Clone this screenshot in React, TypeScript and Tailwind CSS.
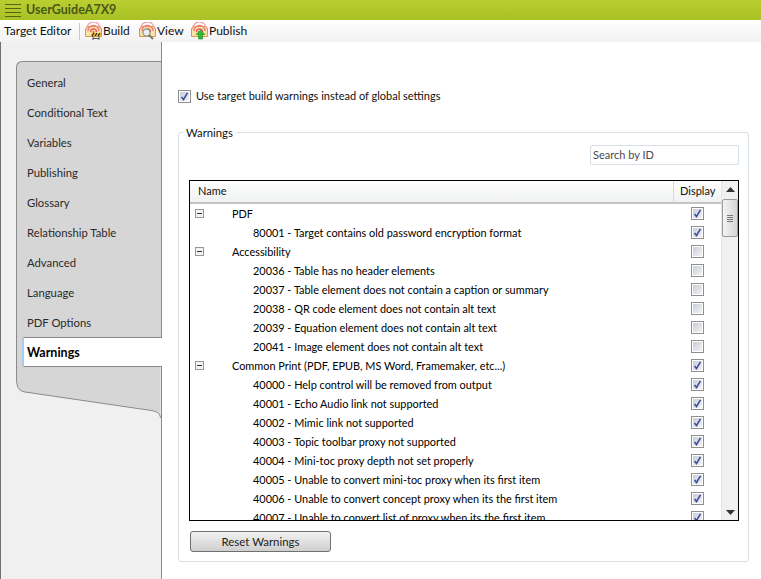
const tabs = ['General', 'Conditional Text', 'Variables', 'Publishing', 'Glossary', 'Relationship Table', 'Advanced', 'Language', 'PDF Options'];

type Row = { label: string; checked: boolean; group?: boolean };

const rows: Row[] = [
  { label: 'PDF', checked: true, group: true },
  { label: '80001 - Target contains old password encryption format', checked: true },
  { label: 'Accessibility', checked: false, group: true },
  { label: '20036 - Table has no header elements', checked: false },
  { label: '20037 - Table element does not contain a caption or summary', checked: false },
  { label: '20038 - QR code element does not contain alt text', checked: false },
  { label: '20039 - Equation element does not contain alt text', checked: false },
  { label: '20041 - Image element does not contain alt text', checked: false },
  { label: 'Common Print (PDF, EPUB, MS Word, Framemaker, etc...)', checked: true, group: true },
  { label: '40000 - Help control will be removed from output', checked: true },
  { label: '40001 - Echo Audio link not supported', checked: true },
  { label: '40002 - Mimic link not supported', checked: true },
  { label: '40003 - Topic toolbar proxy not supported', checked: true },
  { label: '40004 - Mini-toc proxy depth not set properly', checked: true },
  { label: '40005 - Unable to convert mini-toc proxy when its first item', checked: true },
  { label: '40006 - Unable to convert concept proxy when its the first item', checked: true },
  { label: '40007 - Unable to convert list of proxy when its the first item', checked: true },
];

function Check({ checked }: { checked: boolean }) {
  return (
    <div className="w-[13px] h-[13px] border border-[#8e8f8f] bg-white p-px shrink-0">
      <div className="relative w-full h-full bg-gradient-to-br from-[#c9cdd6] to-[#f2f3f6]">
        {checked && (
          <svg viewBox="0 0 9 9" className="absolute inset-0 w-[9px] h-[9px]">
            <path d="M1.5 5 L3.5 7.5 L7.5 0.8" fill="none" stroke="#3f4f9e" strokeWidth="1.6" />
          </svg>
        )}
      </div>
    </div>
  );
}

function ToolIcon({ kind }: { kind: 'build' | 'view' | 'publish' }) {
  return (
    <svg viewBox="0 0 17 18" className="w-[17px] h-[18px] shrink-0">
      <path d="M0.5 6.5 L3 4.5 H14 L16.5 6.5 V14.5 H0.5 Z" fill="#fbe3a8" stroke="#d99a45" />
      <path d="M3 9 A5.5 5.5 0 0 1 14 9" fill="none" stroke="#ef7f7f" strokeWidth="1.4" />
      <path d="M1.5 7 A7 7 0 0 1 15.5 7" fill="none" stroke="#f29a9a" strokeWidth="1.2" />
      <path d="M5.5 10 A3 3 0 0 1 11.5 10" fill="none" stroke="#e85f5f" strokeWidth="1.4" />
      <circle cx="8.5" cy="10" r="1.1" fill="#e04f4f" />
      {kind === 'build' && (
        <>
          <rect x="6" y="11" width="10" height="3" fill="#f2c230" />
          <path d="M7 14 L9 11 M10 14 L12 11 M13 14 L15 11" stroke="#222" strokeWidth="1.2" />
          <path d="M8 14 V18 M14 14 V18 M8 16.5 H14" stroke="#555" strokeWidth="1" />
        </>
      )}
      {kind === 'view' && (
        <>
          <circle cx="7.5" cy="10.5" r="3.5" fill="#e8eef2" stroke="#8a9298" strokeWidth="1.2" />
          <path d="M10 13 L14 17" stroke="#777" strokeWidth="1.8" />
        </>
      )}
      {kind === 'publish' && <path d="M9.5 8 L14 12.5 H11.5 V17 H7.5 V12.5 H5 Z" fill="#35b535" stroke="#1e8a1e" strokeWidth="0.6" />}
    </svg>
  );
}

function ToolButton({ kind, label, className }: { kind: 'build' | 'view' | 'publish'; label: string; className: string }) {
  return (
    <div className={`flex items-center gap-[1px] ${className}`}>
      <ToolIcon kind={kind} />
      <span>{label}</span>
    </div>
  );
}

export default function App() {
  return (
    <div className="w-[761px] h-[579px] overflow-hidden flex flex-col bg-[#f0f0f0] text-[12px] text-[#111] font-['Lato',sans-serif]">
      {/* Title bar */}
      <div className="h-5 shrink-0 flex items-center bg-gradient-to-b from-[#b9cf30] to-[#a9c126]">
        <div className="ml-[5px] w-4 flex flex-col gap-[3px]">
          <div className="h-px bg-[#57631a]" />
          <div className="h-px bg-[#57631a]" />
          <div className="h-px bg-[#57631a]" />
          <div className="h-px bg-[#57631a]" />
        </div>
        <span className="ml-[5px] font-bold text-[12.5px] text-[#4a5716]">UserGuideA7X9</span>
      </div>

      {/* Toolbar */}
      <div className="h-[22px] shrink-0 flex items-center pl-1 text-[12px] bg-gradient-to-b from-white to-[#f2f2f2]">
        <span className="w-[68px] whitespace-nowrap">Target Editor</span>
        <div className="ml-[7px] w-px h-[17px] bg-[#c8c8c8]" />
        <ToolButton kind="build" label="Build" className="ml-[5px] w-[54px]" />
        <ToolButton kind="view" label="View" className="w-[52px]" />
        <ToolButton kind="publish" label="Publish" className="" />
      </div>

      <div className="flex-1 flex min-h-0 border-l border-[#707070]">
        {/* Side tabs */}
        <div className="w-[160px] shrink-0 pl-[15px] pt-[19px]">
          <div className="bg-[#d6d6d6] border-l border-t border-[#8a8a8a] rounded-tl-[6px] pt-[6px] text-[11.3px]">
            {tabs.map((tab) => (
              <div key={tab} className="h-[30px] flex items-center pl-[10px] text-[#2a2a2a]">
                {tab}
              </div>
            ))}
            <div className="relative -mt-px ml-[5px] -mr-px h-[30px] flex items-center pl-[3px] pt-[3px] bg-white border-y border-[#8a8a8a] border-l-2 border-l-[#a3cdf3] rounded-l-[2px] font-bold text-[12.5px] text-black">
              Warnings
            </div>
          </div>
          <svg viewBox="0 0 145 52" className="w-[145px] h-[52px] block">
            <path d="M0.5 0 V13 C1 21 3 24 9 25 L132 43 C141 44 144 46 144.5 51 V0 Z" fill="#d6d6d6" />
            <path d="M0.5 0 V13 C1 21 3 24 9 25 L132 43 C141 44 144 46 144.5 51" fill="none" stroke="#8a8a8a" />
          </svg>
        </div>

        {/* Settings panel */}
        <div className="flex-1 min-w-0 bg-white border-l border-[#8a8a8a] pl-4 pr-3">
          <div className="mt-[47px] h-[15px] flex items-center gap-[5px] text-[11px]">
            <Check checked />
            <span>Use target build warnings instead of global settings</span>
          </div>

          <div className="relative mt-[28px] h-[430px] border border-[#d5dfe5] rounded-[3px] pl-[10px] pr-[9px]">
            <span className="absolute -top-2 left-[4px] h-[15px] px-[3px] bg-white leading-[15px] text-[11.3px]">Warnings</span>

            <div className="mt-[12px] flex justify-end">
              <div className="w-[149px] h-5 border border-[#d5dfe5] rounded-[2px] pl-[2px] flex items-center text-[11px] text-[#4a4a4a]">Search by ID</div>
            </div>

            <div className="mt-[15px] h-[341px] border border-black flex overflow-hidden">
              <div className="flex-1 min-w-0 flex flex-col">
                <div className="h-[23px] shrink-0 flex border-b-2 border-[#c2c4c6] text-[11px] bg-gradient-to-b from-white to-[#f0f1f2]">
                  <div className="flex-1 pl-2 flex items-center">Name</div>
                  <div className="w-12 border-l border-[#d8d8d8] pl-[6px] flex items-center">Display</div>
                </div>
                <div className="flex-1 overflow-hidden text-[10.9px] text-black">
                  {rows.map((row) => (
                    <div key={row.label} className="h-[19px] flex items-center">
                      <div className="w-[42px] shrink-0 pl-[5px]">
                        {row.group && (
                          <div className="w-[9px] h-[9px] border border-[#8d9aa3] flex items-center justify-center bg-[#f4f4f4]">
                            <div className="w-[5px] h-px bg-[#333]" />
                          </div>
                        )}
                      </div>
                      <span className={`flex-1 min-w-0 pt-[2px] whitespace-nowrap ${row.group ? '' : 'pl-[21px]'}`}>{row.label}</span>
                      <div className="w-[30px] shrink-0">
                        <Check checked={row.checked} />
                      </div>
                    </div>
                  ))}
                </div>
              </div>

              {/* Scrollbar */}
              <div className="w-[17px] shrink-0 bg-[#f0f0f0] flex flex-col items-center border-l border-[#e4e4e4]">
                <svg viewBox="0 0 9 5" className="w-[9px] h-[5px] mt-[6px]">
                  <path d="M4.5 0 L9 5 H0 Z" fill="#333" />
                </svg>
                <div className="mt-[7px] w-[16px] h-[38px] border border-[#9a9a9a] rounded-[2px] bg-gradient-to-r from-[#f4f4f4] to-[#d6d6d6] flex flex-col items-center justify-center gap-px">
                  <div className="w-[6px] h-px bg-[#777]" />
                  <div className="w-[6px] h-px bg-[#777]" />
                  <div className="w-[6px] h-px bg-[#777]" />
                  <div className="w-[6px] h-px bg-[#777]" />
                </div>
                <svg viewBox="0 0 9 5" className="w-[9px] h-[5px] mt-auto mb-[5px]">
                  <path d="M0 0 H9 L4.5 5 Z" fill="#333" />
                </svg>
              </div>
            </div>

            <button className="ml-px mt-[10px] w-[141px] h-[21px] border border-[#707070] rounded-[3px] bg-gradient-to-b from-[#f2f2f2] to-[#cfcfcf] text-[11.4px] text-[#1c1c1c]">
              Reset Warnings
            </button>
          </div>
        </div>
      </div>
    </div>
  );
}
